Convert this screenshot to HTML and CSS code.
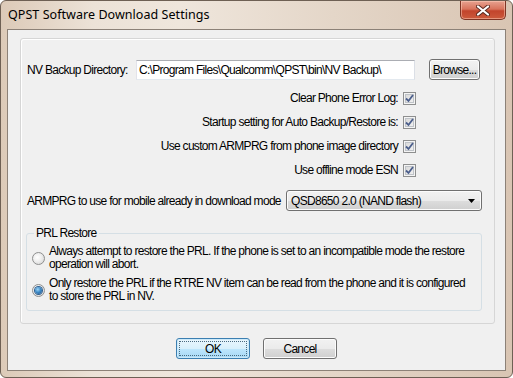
FILE: index.html
```html
<!DOCTYPE html>
<html lang="en">
<head>
    <meta charset="UTF-8">
    <meta name="viewport" content="width=device-width, initial-scale=1.0">
    <title>QPST Software Download Settings</title>
    <link rel="stylesheet" href="styles.css">
</head>
<body>
    <div class="window">
        <div class="titlebar">
            <span class="title">QPST Software Download Settings</span>
            <div class="close">
                <svg width="14" height="11" viewBox="0 0 14 11">
                    <path d="M2 1.5 L12 9.5 M12 1.5 L2 9.5" stroke="#5a2a20" stroke-width="4" stroke-linecap="round"/>
                    <path d="M2 1.5 L12 9.5 M12 1.5 L2 9.5" stroke="#fff" stroke-width="2.2" stroke-linecap="round"/>
                </svg>
            </div>
        </div>

        <div class="client">
            <div class="panel">
                <div class="dir-row">
                    <span class="dir-label">NV Backup Directory:</span>
                    <div class="textbox">C:\Program Files\Qualcomm\QPST\bin\NV Backup\</div>
                    <div class="btn browse">Browse...</div>
                </div>

                <!-- 체크박스 줄들, 오른쪽 정렬 -->
                <div class="checks">
                    <div class="check-row">
                        <span>Clear Phone Error Log:</span>
                        <span class="checkbox"><svg width="9" height="9" viewBox="0 0 9 9"><path d="M1 4.5 L3.5 7 L8 1" fill="none" stroke="#4c5f8c" stroke-width="1.8"/></svg></span>
                    </div>
                    <div class="check-row">
                        <span>Startup setting for Auto Backup/Restore is:</span>
                        <span class="checkbox"><svg width="9" height="9" viewBox="0 0 9 9"><path d="M1 4.5 L3.5 7 L8 1" fill="none" stroke="#4c5f8c" stroke-width="1.8"/></svg></span>
                    </div>
                    <div class="check-row">
                        <span>Use custom ARMPRG from phone image directory</span>
                        <span class="checkbox"><svg width="9" height="9" viewBox="0 0 9 9"><path d="M1 4.5 L3.5 7 L8 1" fill="none" stroke="#4c5f8c" stroke-width="1.8"/></svg></span>
                    </div>
                    <div class="check-row">
                        <span>Use offline mode ESN</span>
                        <span class="checkbox"><svg width="9" height="9" viewBox="0 0 9 9"><path d="M1 4.5 L3.5 7 L8 1" fill="none" stroke="#4c5f8c" stroke-width="1.8"/></svg></span>
                    </div>
                </div>

                <div class="armprg-row">
                    <span>ARMPRG to use for mobile already in download mode</span>
                    <div class="combo">
                        <span>QSD8650 2.0 (NAND flash)</span>
                        <svg width="7" height="4" viewBox="0 0 7 4"><path d="M0 0 H7 L3.5 4 Z" fill="#000"/></svg>
                    </div>
                </div>

                <fieldset class="prl">
                    <legend>PRL Restore</legend>
                    <div class="radio-row">
                        <span class="radio"></span>
                        <span class="radio-text">Always attempt to restore the PRL. If the phone is set to an incompatible mode the restore operation will abort.</span>
                    </div>
                    <div class="radio-row">
                        <span class="radio on"><span class="dot"></span></span>
                        <span class="radio-text">Only restore the PRL if the RTRE NV item can be read from the phone and it is configured to store the PRL in NV.</span>
                    </div>
                </fieldset>
            </div>

            <div class="buttons">
                <div class="btn ok"><span class="focus">OK</span></div>
                <div class="btn cancel">Cancel</div>
            </div>
        </div>
    </div>
</body>
</html>
```

FILE: styles.css
```css
* {
    margin: 0;
    padding: 0;
    box-sizing: border-box;
}

body {
    width: 513px;
    height: 378px;
    overflow: hidden;
    background: #fff;
    font-family: "Liberation Sans", Arial, sans-serif;
    font-size: 12px;
    letter-spacing: -0.7px;
    color: #000;
}

.window {
    width: 513px;
    height: 378px;
    border: 1px solid #6e6054;
    border-radius: 6px;
    background: linear-gradient(to right, #dccab8 0%, #ece2d7 18%, #efe6dc 35%, #e4d6c8 65%, #d9c5b3 100%);
    display: flex;
    flex-direction: column;
    padding: 0 6px;
}

.titlebar {
    height: 28px;
    display: flex;
    justify-content: space-between;
    align-items: flex-start;
}

.title {
    font-family: "Noto Sans", sans-serif;
    font-size: 12.5px;
    letter-spacing: 0.05px;
    line-height: 28px;
    padding-left: 1px;
}

.close {
    width: 46px;
    height: 19px;
    border: 1px solid #7e3424;
    border-top: none;
    border-radius: 0 0 5px 5px;
    background: linear-gradient(#e7a290 0%, #d8735c 45%, #c2442c 55%, #cc5a3c 100%);
    box-shadow: inset 0 0 0 1px rgba(255, 210, 190, 0.5);
    display: flex;
    justify-content: center;
    align-items: center;
}

.client {
    height: 342px;
    background: #f0f0f0;
    border: 1px solid #8c8177;
    padding: 8px 0 0 12px;
    white-space: nowrap;
}

.panel {
    width: 475px;
    height: 286px;
    border: 1px solid #d6d6d6;
    border-radius: 3px;
    box-shadow: inset 1px 1px 0 #fff;
    padding: 0 0 0 6px;
}

.dir-row {
    display: flex;
    align-items: center;
    height: 21px;
    margin-top: 20px;
}

.dir-label {
    width: 109px;
    flex-shrink: 0;
}

.textbox {
    width: 279px;
    height: 20px;
    background: #fff;
    border: 1px solid #abadb3;
    border-color: #abadb3 #dbdfe6 #e3e9ef #e2e3ea;
    padding-left: 2px;
    line-height: 18px;
    overflow: hidden;
}

.btn {
    height: 21px;
    border: 1px solid #707070;
    border-radius: 3px;
    background: linear-gradient(#f2f2f2 0%, #ebebeb 50%, #dddddd 51%, #cfcfcf 100%);
    box-shadow: inset 0 0 0 1px #fcfcfc;
    display: flex;
    justify-content: center;
    align-items: center;
}

.browse {
    width: 51px;
    margin-left: 14px;
}

.checks {
    margin-top: 6px;
    padding-right: 78px;
}

.check-row {
    height: 24px;
    display: flex;
    justify-content: flex-end;
    align-items: center;
    gap: 5px;
}

.checkbox {
    width: 13px;
    height: 13px;
    border: 1px solid #8e8f8f;
    background: linear-gradient(135deg, #d4d4d4, #f6f6f6);
    box-shadow: inset 0 0 0 1px #f4f4f4, inset 0 0 0 2px #bfc3c8;
    display: flex;
    justify-content: center;
    align-items: center;
}

.armprg-row {
    display: flex;
    align-items: center;
    justify-content: space-between;
    height: 21px;
    margin-top: 8px;
    padding-right: 12px;
}

.combo {
    width: 196px;
    height: 21px;
    border: 1px solid #707070;
    border-radius: 3px;
    background: linear-gradient(#f2f2f2 0%, #ebebeb 50%, #dddddd 51%, #cfcfcf 100%);
    box-shadow: inset 0 0 0 1px #fcfcfc;
    display: flex;
    justify-content: space-between;
    align-items: center;
    padding: 0 6px 0 4px;
}

.prl {
    margin: 16px 12px 0 -1px;
    border: 1px solid #d5dfe5;
    border-radius: 3px;
    padding: 0 7px 7px 5px;
}

.prl legend {
    margin-left: 2px;
    padding: 0 2px;
    line-height: 13px;
}

.radio-row {
    display: flex;
    align-items: center;
    gap: 4px;
    margin-top: 5px;
}

.radio-row + .radio-row {
    margin-top: 6px;
}

.radio {
    width: 13px;
    height: 13px;
    flex-shrink: 0;
    border-radius: 50%;
    border: 1px solid #8e8f8f;
    background: radial-gradient(circle at 40% 40%, #ffffff 0%, #f0f0f0 40%, #cfcfcf 100%);
    display: flex;
    justify-content: center;
    align-items: center;
}

.dot {
    width: 7px;
    height: 7px;
    border-radius: 50%;
    background: radial-gradient(circle at 40% 35%, #9fd6f7 0%, #3f8cc8 45%, #174a83 100%);
    box-shadow: 0 0 0 1px #2f5f8f;
}

.radio-text {
    line-height: 13px;
    width: 424px;
    white-space: normal;
}

.buttons {
    display: flex;
    justify-content: center;
    gap: 13px;
    margin: 14px 0 0 -12px;
}

.buttons .btn {
    width: 74px;
}

.ok {
    border-color: #3c7fb1;
    background: linear-gradient(#eaf6fd 0%, #d9f0fc 50%, #bee6fd 51%, #a7d9f5 100%);
    box-shadow: inset 0 0 0 1px #cdeafa;
    padding: 2px;
}

.ok .focus {
    width: 100%;
    height: 100%;
    border: 1px dotted #4a6a80;
    display: flex;
    justify-content: center;
    align-items: center;
}
```
